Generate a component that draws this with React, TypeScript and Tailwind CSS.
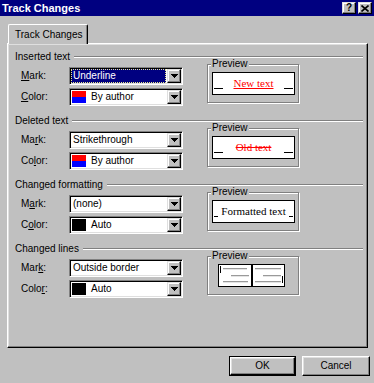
import type { ReactNode } from 'react';

// Win95-style bevels
const RAISED =
  'border border-t-white border-l-white border-r-black border-b-black shadow-[inset_-1px_-1px_0_#808080,inset_1px_1px_0_#dfdfdf]';
const SMALL_RAISED =
  'border border-t-[#dfdfdf] border-l-[#dfdfdf] border-r-black border-b-black shadow-[inset_-1px_-1px_0_#808080,inset_1px_1px_0_#ffffff]';
const SUNKEN =
  'border border-t-[#808080] border-l-[#808080] border-r-white border-b-white shadow-[inset_1px_1px_0_#000000,inset_-1px_-1px_0_#dfdfdf]';

type Swatch = 'author' | 'auto';
type PreviewKind = 'inserted' | 'deleted' | 'formatted' | 'lines';

interface Group {
  title: string;
  mark: string;
  markKey: number;
  color: string;
  colorKey: number;
  swatch: Swatch;
  preview: PreviewKind;
  focused?: boolean;
}

const GROUPS: Group[] = [
  { title: 'Inserted text', mark: 'Underline', markKey: 0, color: 'By author', colorKey: 0, swatch: 'author', preview: 'inserted', focused: true },
  { title: 'Deleted text', mark: 'Strikethrough', markKey: 2, color: 'By author', colorKey: 2, swatch: 'author', preview: 'deleted' },
  { title: 'Changed formatting', mark: '(none)', markKey: 1, color: 'Auto', colorKey: 1, swatch: 'auto', preview: 'formatted' },
  { title: 'Changed lines', mark: 'Outside border', markKey: 3, color: 'Auto', colorKey: 4, swatch: 'auto', preview: 'lines' },
];

function AccessLabel({ text, at }: { text: string; at: number }) {
  return (
    <span>
      {text.slice(0, at)}
      <span className="underline underline-offset-[1px]">{text[at]}</span>
      {text.slice(at + 1)}
    </span>
  );
}

function DownArrow() {
  return (
    <svg width="7" height="4" viewBox="0 0 7 4" shapeRendering="crispEdges">
      <rect x="0" y="0" width="7" height="1" fill="#000" />
      <rect x="1" y="1" width="5" height="1" fill="#000" />
      <rect x="2" y="2" width="3" height="1" fill="#000" />
      <rect x="3" y="3" width="1" height="1" fill="#000" />
    </svg>
  );
}

function Combo({ children }: { children: ReactNode }) {
  return (
    <div className={`flex h-[18px] w-[114px] bg-white p-[1px] ${SUNKEN}`}>
      <div className="mr-[1px] flex min-w-0 flex-1 items-center">{children}</div>
      <div className={`flex h-[14px] w-[14px] items-center justify-center bg-[#c0c0c0] ${SMALL_RAISED}`}>
        <DownArrow />
      </div>
    </div>
  );
}

function ColorSwatch({ kind }: { kind: Swatch }) {
  if (kind === 'auto') {
    return <div className="ml-[1px] h-[12px] w-[14px] bg-black" />;
  }
  return (
    <div className="ml-[1px] flex h-[12px] w-[14px] flex-col">
      <div className="h-[6px] bg-[#ff0000]" />
      <div className="h-[6px] bg-[#0000ff]" />
    </div>
  );
}

function LinesPicture() {
  const gray = '#9a9a9a';
  const light = '#e4e4e4';
  return (
    <svg width="67" height="23" viewBox="0 0 67 23" shapeRendering="crispEdges">
      <rect x="0.5" y="0.5" width="66" height="22" fill="#fff" stroke="#000" />
      <rect x="33" y="0" width="2" height="23" fill="#000" />
      {/* left pane */}
      <rect x="2" y="2" width="1" height="7" fill="#000" />
      <rect x="5" y="4" width="24" height="1" fill={gray} />
      <rect x="5" y="5" width="24" height="1" fill={light} />
      <rect x="13" y="11" width="18" height="1" fill={gray} />
      <rect x="13" y="12" width="18" height="1" fill={light} />
      <rect x="5" y="17" width="25" height="1" fill={gray} />
      <rect x="5" y="18" width="25" height="1" fill={light} />
      {/* right pane */}
      <rect x="37" y="4" width="26" height="1" fill={gray} />
      <rect x="37" y="5" width="26" height="1" fill={light} />
      <rect x="45" y="11" width="18" height="1" fill={gray} />
      <rect x="45" y="12" width="18" height="1" fill={light} />
      <rect x="37" y="17" width="26" height="1" fill={gray} />
      <rect x="37" y="18" width="26" height="1" fill={light} />
      <rect x="64" y="12" width="1" height="7" fill="#000" />
    </svg>
  );
}

function PreviewBox({ kind }: { kind: PreviewKind }) {
  return (
    <div className="relative -mt-[3px] ml-[24px] h-[39px] w-[92px] border border-[#808080] shadow-[inset_1px_1px_0_#ffffff,1px_1px_0_#ffffff]">
      <span className="absolute -top-[7px] left-[3px] bg-[#c0c0c0] px-[1px] text-[10px] leading-[12px] text-black">
        Preview
      </span>
      {kind === 'lines' ? (
        <div className="ml-[10px] mt-[7px]">
          <LinesPicture />
        </div>
      ) : (
        <div className="ml-[4px] mt-[7px] flex h-[23px] w-[83px] items-end justify-between border border-black bg-white px-[1px] pb-[5px] font-['Liberation_Serif','Times_New_Roman',serif] text-[11px] leading-[11px]">
          {kind === 'formatted' ? (
            <>
              <span className="h-[1px] w-[4px] bg-black" />
              <span className="text-black">Formatted text</span>
              <span className="h-[1px] w-[4px] bg-black" />
            </>
          ) : (
            <>
              <span className="h-[1px] w-[9px] bg-black" />
              {kind === 'inserted' ? (
                <span className="text-[#ff0000] underline underline-offset-[1px]">New text</span>
              ) : (
                <span className="text-[#ff0000] line-through">Old text</span>
              )}
              <span className="h-[1px] w-[9px] bg-black" />
            </>
          )}
        </div>
      )}
    </div>
  );
}

function OptionGroup({ group }: { group: Group }) {
  return (
    <div className="mb-[8px] pl-[7px]">
      <div className="flex h-[13px] items-center">
        <span className="leading-[13px]">{group.title}</span>
        <div className="ml-[4px] h-[2px] flex-1 border-t border-b border-t-[#808080] border-b-white" />
      </div>
      <div className="mt-[4px] flex items-start pl-[6px]">
        <div className="flex flex-col gap-[3px]">
          <div className="flex h-[18px] items-center">
            <div className="w-[48px]">
              <AccessLabel text="Mark:" at={group.markKey} />
            </div>
            <Combo>
              {group.focused ? (
                <div className="flex h-[14px] flex-1 items-center border border-dotted border-[#e8e890] bg-[#000080] pl-[1px] text-white">
                  {group.mark}
                </div>
              ) : (
                <span className="pl-[2px]">{group.mark}</span>
              )}
            </Combo>
          </div>
          <div className="flex h-[18px] items-center">
            <div className="w-[48px]">
              <AccessLabel text="Color:" at={group.colorKey} />
            </div>
            <Combo>
              <ColorSwatch kind={group.swatch} />
              <span className="ml-[5px]">{group.color}</span>
            </Combo>
          </div>
        </div>
        <PreviewBox kind={group.preview} />
      </div>
    </div>
  );
}

function CaptionButton({ children }: { children: ReactNode }) {
  return (
    <div className={`flex h-[12px] w-[14px] items-center justify-center bg-[#c0c0c0] ${SMALL_RAISED}`}>
      {children}
    </div>
  );
}

export default function App() {
  return (
    <div className="h-[383px] w-[374px] overflow-hidden bg-[#c0c0c0] font-['Liberation_Sans',Arial,sans-serif] text-[10px] leading-[12px] text-black">
      {/* title bar */}
      <div className="flex h-[16px] items-center justify-between bg-[#000080] pl-[2px] pr-[2px]">
        <span className="text-[11px] font-bold leading-none text-white">Track Changes</span>
        <div className="flex gap-[2px]">
          <CaptionButton>
            <span className="text-[10px] font-bold leading-none">?</span>
          </CaptionButton>
          <CaptionButton>
            <svg width="8" height="7" viewBox="0 0 8 7">
              <path d="M0.5 0.5 L7.5 6.5 M7.5 0.5 L0.5 6.5" stroke="#000" strokeWidth="1.6" />
            </svg>
          </CaptionButton>
        </div>
      </div>

      {/* tab */}
      <div className="relative z-10 -mb-[1px] ml-[8px] mt-[8px] flex h-[20px] w-[80px] items-center rounded-tl-[2px] rounded-tr-[2px] border-t border-l border-r border-t-white border-l-white border-r-black bg-[#c0c0c0] pl-[6px] shadow-[inset_-1px_0_0_#808080]">
        Track Changes
      </div>

      {/* panel */}
      <div className={`ml-[7px] h-[305px] w-[361px] pr-[4px] pt-[6px] ${RAISED}`}>
        {GROUPS.map((g) => (
          <OptionGroup key={g.title} group={g} />
        ))}
      </div>

      {/* buttons */}
      <div className="mt-[8px] flex justify-end gap-[6px] pr-[4px]">
        <div className="h-[20px] w-[67px] border border-black">
          <div className={`flex h-full w-full items-center justify-center ${RAISED}`}>OK</div>
        </div>
        <div className={`flex h-[20px] w-[68px] items-center justify-center ${RAISED}`}>Cancel</div>
      </div>
    </div>
  );
}
